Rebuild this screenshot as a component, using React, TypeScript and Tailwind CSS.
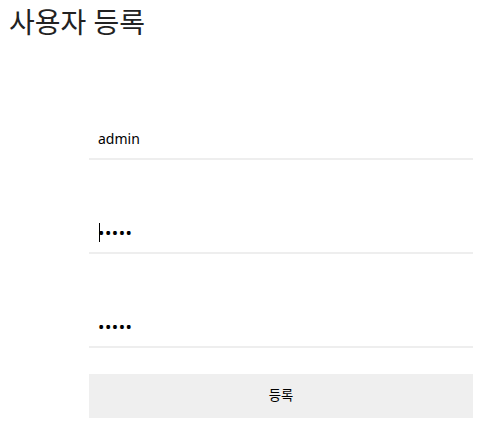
import { useState } from "react";

const font = { fontFamily: '"Noto Sans", "Noto Sans CJK KR", sans-serif' };

export default function App() {
  const [id, setId] = useState("admin");
  const [pw, setPw] = useState("12345");
  const [pw2, setPw2] = useState("12345");

  return (
    <div className="min-h-[435px] w-[494px] bg-white" style={font}>
      <h1 className="pl-[9px] pt-[4px] text-[28px] leading-[36px] font-normal text-[#222]">사용자 등록</h1>

      <form className="ml-[89px] w-[384px] pt-[78px]" onSubmit={(e) => e.preventDefault()}>
        <input
          value={id}
          onChange={(e) => setId(e.target.value)}
          className="block h-[42px] w-full border-b-2 border-[#eeeeee] px-[9px] text-[14px] text-black outline-none"
        />
        <div className="relative mt-[52px]">
          <input
            type="password"
            value={pw}
            onChange={(e) => setPw(e.target.value)}
            className="block h-[42px] w-full border-b-2 border-[#eeeeee] px-[9px] text-[17px] tracking-[0.5px] text-black outline-none"
          />
          <span className="pointer-events-none absolute left-[10px] top-[11px] h-[19px] w-px bg-black" />
        </div>
        <input
          type="password"
          value={pw2}
          onChange={(e) => setPw2(e.target.value)}
          className="mt-[52px] block h-[42px] w-full border-b-2 border-[#eeeeee] px-[9px] text-[17px] tracking-[0.5px] text-black outline-none"
        />
        <button
          type="submit"
          className="mt-[26px] block h-[44px] w-full bg-[#efefef] text-[13.33px] text-black"
        >
          등록
        </button>
      </form>
    </div>
  );
}
